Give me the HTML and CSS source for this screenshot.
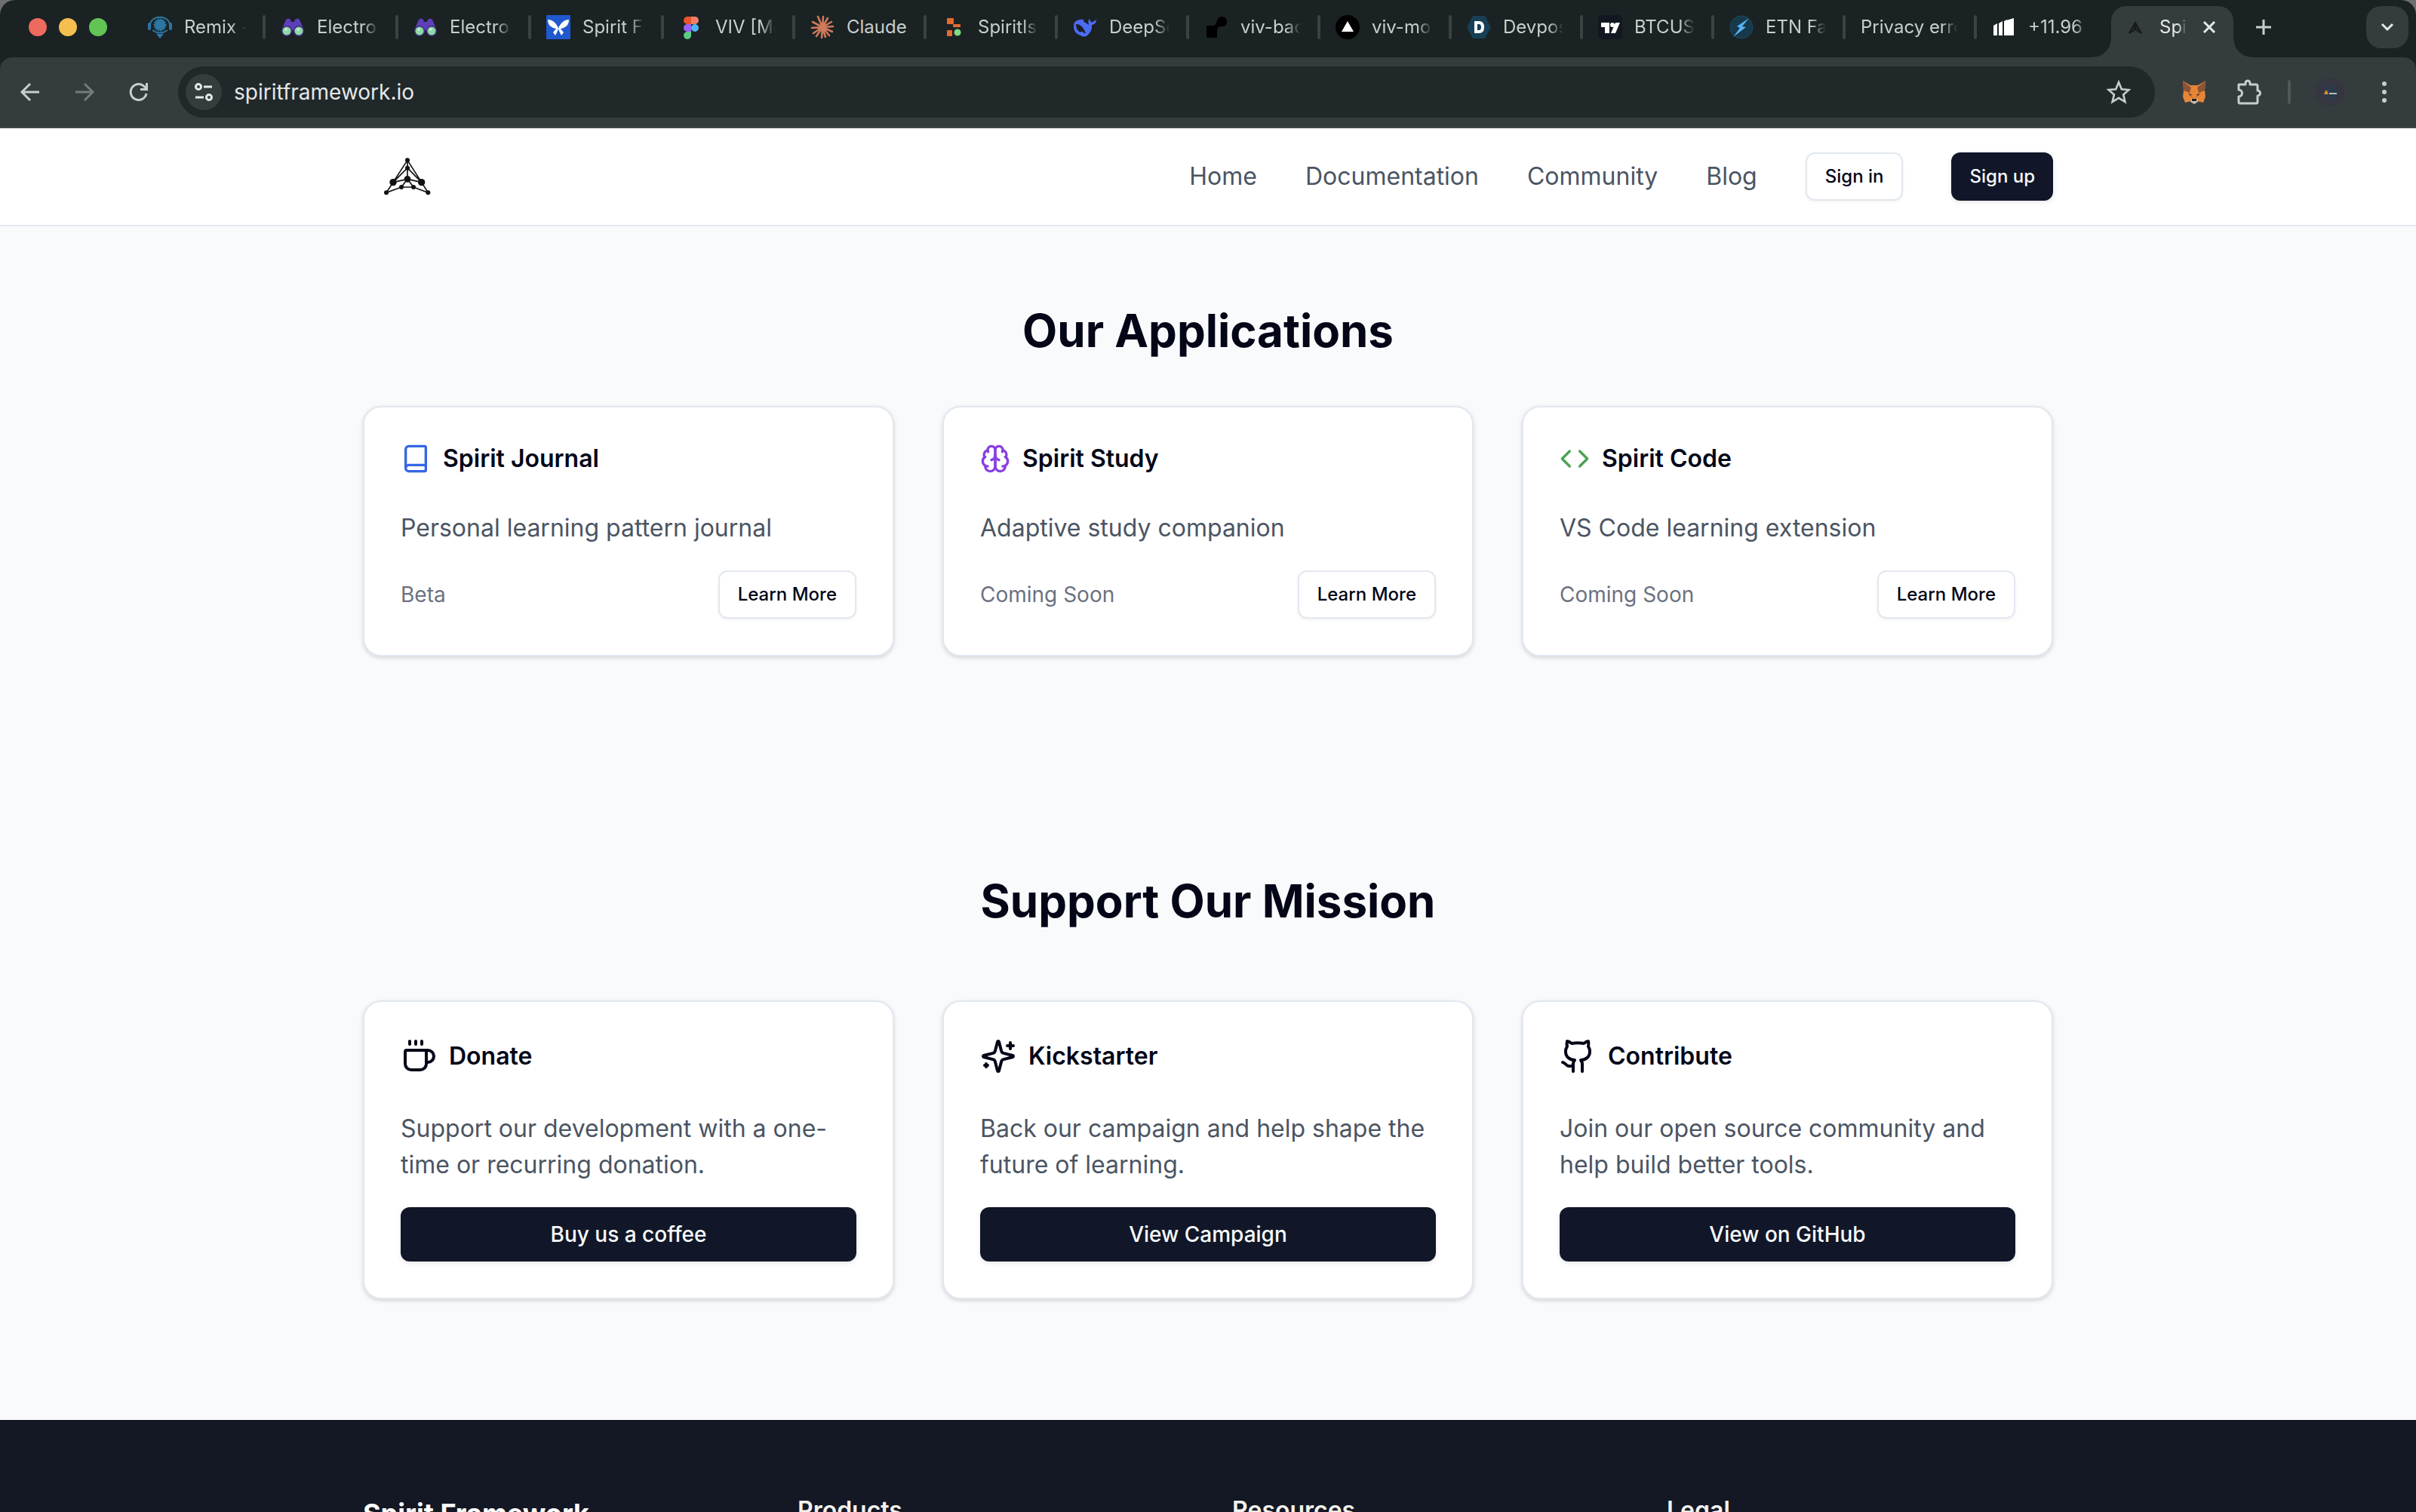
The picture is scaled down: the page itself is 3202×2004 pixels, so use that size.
FILE: index.html
```html
<!DOCTYPE html>
<html lang="en">
<head>
<meta charset="utf-8">
<title>Spirit Framework</title>
<link rel="stylesheet" href="styles.css">
</head>
<body>
<div class="window">
  <div class="tabstrip">
    <div class="lights">
      <button class="light light--close" aria-label="Close window"></button>
      <button class="light light--min" aria-label="Minimize window"></button>
      <button class="light light--max" aria-label="Zoom window"></button>
    </div>
    <div class="tabs">
      <div class="tab tab--wide">
        <svg class="favicon" viewBox="0 0 32 32"><path d="M3 14C3 -1 29 -1 29 14" fill="none" stroke="#2d76a3" stroke-width="2"/><circle cx="16" cy="13" r="7" fill="#2d76a3" stroke="#2d76a3" stroke-width="3" stroke-dasharray="2 1"/><rect x="0" y="10" width="4" height="10" rx="2" fill="#2d76a3"/><rect x="28" y="10" width="4" height="10" rx="2" fill="#2d76a3"/><path d="M6 20q10 7 20 0" fill="none" stroke="#2d76a3" stroke-width="2"/><path d="M11 25h10l-5 6z" fill="#2d76a3"/></svg>
        <span class="tab__title">Remix -</span><span class="tab__sep"></span>
      </div>
      <div class="tab tab--wide">
        <svg class="favicon" viewBox="0 0 32 32"><path d="M1 20L7 6q3-3 6 0l1 3h4l1-3q3-3 6 0l6 14-6 4h-7l-2-5-2 5H7z" fill="#5e3fb8"/><circle cx="8" cy="21" r="7" fill="#3d2c80"/><circle cx="24" cy="21" r="7" fill="#3d2c80"/><circle cx="8" cy="21" r="5.500" fill="#8fd9a8"/><circle cx="24" cy="21" r="5.500" fill="#8fd9a8"/><circle cx="7" cy="19" r="1.500" fill="#d6f5df"/><circle cx="23" cy="19" r="1.500" fill="#d6f5df"/></svg>
        <span class="tab__title">Electro</span><span class="tab__sep"></span>
      </div>
      <div class="tab tab--wide">
        <svg class="favicon" viewBox="0 0 32 32"><path d="M1 20L7 6q3-3 6 0l1 3h4l1-3q3-3 6 0l6 14-6 4h-7l-2-5-2 5H7z" fill="#5e3fb8"/><circle cx="8" cy="21" r="7" fill="#3d2c80"/><circle cx="24" cy="21" r="7" fill="#3d2c80"/><circle cx="8" cy="21" r="5.500" fill="#8fd9a8"/><circle cx="24" cy="21" r="5.500" fill="#8fd9a8"/><circle cx="7" cy="19" r="1.500" fill="#d6f5df"/><circle cx="23" cy="19" r="1.500" fill="#d6f5df"/></svg>
        <span class="tab__title">Electro</span><span class="tab__sep"></span>
      </div>
      <div class="tab tab--wide">
        <svg class="favicon" viewBox="0 0 32 32"><rect width="32" height="32" rx="1" fill="#2058cf"/><path d="M2 6q8 0 13 9l1 3 1-3q5-9 13-9 0 8-7 11l-4 1 4 5-3 4-3-6-1-3-1 3-3 6-3-4 4-5-4-1Q2 14 2 6z" fill="#fff"/></svg>
        <span class="tab__title">Spirit Fr</span><span class="tab__sep"></span>
      </div>
      <div class="tab">
        <svg class="favicon" viewBox="0 0 32 32"><path d="M16 2h-5a5 5 0 0 0 0 10h5z" fill="#e8552d"/><path d="M16 2h5a5 5 0 0 1 0 10h-5z" fill="#f07f6c"/><path d="M16 12h-5a5 5 0 0 0 0 10h5z" fill="#9a62f5"/><circle cx="21" cy="17" r="5" fill="#4eb4f8"/><path d="M16 22h-5a5 5 0 1 0 5 5z" fill="#5bcb87"/></svg>
        <span class="tab__title">VIV [Mo</span><span class="tab__sep"></span>
      </div>
      <div class="tab">
        <svg class="favicon" viewBox="0 0 32 32"><g stroke="#cf7a5b" stroke-width="2.600" stroke-linecap="round"><path d="M16 16L10 2M16 16L17 2M16 16L23 4M16 16L28 9M16 16L30 15M16 16L29 22M16 16L25 27M16 16L20 29M16 16L15 30M16 16L8 28M16 16L4 24M16 16L2 17M16 16L3 9"/></g></svg>
        <span class="tab__title tab__title--whole">Claude</span><span class="tab__sep"></span>
      </div>
      <div class="tab">
        <svg class="favicon" viewBox="0 0 32 32"><rect x="7" y="4" width="9" height="8" rx="1" fill="#e56a2e"/><rect x="15" y="12" width="10" height="4" rx="1" fill="#e56a2e"/><rect x="7" y="20" width="7" height="8" rx="1" fill="#e56a2e"/><circle cx="21" cy="23" r="4.500" fill="#80da85"/></svg>
        <span class="tab__title">SpiritIs</span><span class="tab__sep"></span>
      </div>
      <div class="tab">
        <svg class="favicon" viewBox="0 0 32 32"><path d="M15 6q-3 1 0 3l6 4q-1-5 0-8l4 5 6-4q0 6-6 7 1 8-6 14-4 3-9 0Q0 24 1 13 2 8 6 7q4-2 9-1z" fill="#4c6bf5"/><path d="M4 12q8-1 13 12l-2 0q-4-4-5-1Q4 20 4 12z" fill="#1b2223"/></svg>
        <span class="tab__title">DeepSe</span><span class="tab__sep"></span>
      </div>
      <div class="tab">
        <svg class="favicon" viewBox="0 0 32 32"><path d="M3 14h10q3-2 4-6 1-6 6-6 7 0 7 7 0 6-7 6-6 0-6 6v9H3z" fill="#000"/></svg>
        <span class="tab__title">viv-bac</span><span class="tab__sep"></span>
      </div>
      <div class="tab">
        <svg class="favicon" viewBox="0 0 32 32"><circle cx="16" cy="16" r="16" fill="#000"/><path d="M16 8l8 14H8z" fill="#fff"/></svg>
        <span class="tab__title">viv-mob</span><span class="tab__sep"></span>
      </div>
      <div class="tab">
        <svg class="favicon" viewBox="0 0 32 32"><path d="M8 1h16l8 15-8 15H8L0 16z" fill="#173f56"/><path d="M10 8h6q7 0 7 8t-7 8h-6zm4 4v8h2q3 0 3-4t-3-4z" fill="#fff"/></svg>
        <span class="tab__title">Devpos</span><span class="tab__sep"></span>
      </div>
      <div class="tab">
        <svg class="favicon" viewBox="0 0 32 32"><rect width="32" height="32" rx="5" fill="#131722"/><path d="M4 10h11v14h-6v-8H4z" fill="#fff"/><circle cx="19" cy="13" r="3" fill="#fff"/><path d="M23 10h6l-6 14h-6z" fill="#fff"/></svg>
        <span class="tab__title">BTCUS</span><span class="tab__sep"></span>
      </div>
      <div class="tab">
        <svg class="favicon" viewBox="0 0 32 32"><circle cx="16" cy="16" r="15" fill="#16384a" stroke="#1e4a62"/><path d="M26 4L10 15l4 2-9 12 17-13-5-1z" fill="#55b3f3"/></svg>
        <span class="tab__title">ETN Fa</span><span class="tab__sep"></span>
      </div>
      <div class="tab">
        <span class="tab__title">Privacy erro</span><span class="tab__sep"></span>
      </div>
      <div class="tab">
        <svg class="favicon" viewBox="0 0 32 32"><path d="M2 14l5-3v16H2zM9 11l5-3v19H9zM16 8l4-2v21h-4zM19 7l10-3v23H19z" fill="#fff"/></svg>
        <span class="tab__title">+11.96</span><span class="tab__sep tab__sep--hidden"></span>
      </div>
      <div class="tab tab--active">
        <svg class="favicon" viewBox="0 0 32 32"><path d="M16 10L8 24l8-5 8 5z M16 10v9" fill="none" stroke="#16191a" stroke-width="2"/><path d="M16 12l-5 8 5-2 5 2z" fill="#16191a" opacity=".600"/></svg>
        <span class="tab__title tab__title--short">Spi</span>
        <button class="tab__close" aria-label="Close tab"><svg width="20" height="20" viewBox="0 0 20 20"><path d="M3 3l14 14M17 3L3 17" stroke="#e4e8e8" stroke-width="3"/></svg></button>
      </div>
    </div>
    <button class="newtab" aria-label="New tab"><svg width="24" height="24" viewBox="0 0 24 24"><path d="M12 2v20M2 12h20" stroke="#c6cece" stroke-width="3"/></svg></button>
    <button class="tabsearch" aria-label="Search tabs"><svg width="24" height="24" viewBox="0 0 24 24"><path d="M5 8l7 7 7-7" fill="none" stroke="#e4e8e8" stroke-width="3"/></svg></button>
  </div>

  <div class="toolbar">
    <div class="toolbar__nav">
      <button class="tool" aria-label="Back"><svg width="32" height="32" viewBox="0 0 32 32"><path d="M28 16H6M16 5L5 16l11 11" fill="none" stroke="#c6cece" stroke-width="3"/></svg></button>
      <button class="tool" aria-label="Forward"><svg width="32" height="32" viewBox="0 0 32 32"><path d="M4 16h22M16 5l11 11-11 11" fill="none" stroke="#757b7c" stroke-width="3"/></svg></button>
      <button class="tool" aria-label="Reload"><svg width="32" height="32" viewBox="0 0 32 32"><path d="M26 18A10.500 10.500 0 1 1 24 9.500L27 12" fill="none" stroke="#c6cece" stroke-width="3"/><path d="M28 4v10H18v-3h7V4z" fill="#c6cece"/></svg></button>
    </div>
    <div class="omnibox">
      <button class="siteinfo" aria-label="View site information"><svg width="28" height="28" viewBox="0 0 28 28"><g fill="none" stroke="#e4e8e8" stroke-width="3"><circle cx="7" cy="7" r="3.500"/><path d="M14 7h11M3 21h11"/><circle cx="21" cy="21" r="3.500"/></g></svg></button>
      <input class="omnibox__input" type="text" aria-label="Address" value="spiritframework.io">
      <button class="tool" aria-label="Bookmark this tab"><svg width="32" height="32" viewBox="0 0 32 32"><path d="M16 3l3.800 9.200 9.700.8-7.400 6.400 2.300 9.600-8.400-5.200L7.600 29l2.300-9.600L2.500 13l9.700-.8z" fill="none" stroke="#c6cece" stroke-width="2.600"/></svg></button>
    </div>
    <div class="toolbar__ext">
      <button class="tool" aria-label="Wallet"><svg width="32" height="32" viewBox="0 0 32 32"><path d="M1 1l10 6h10l10-6-1 13 1 8-3 8-8-2-4 3-4-3-8 2-3-8 1-8z" fill="#e58637"/><path d="M1 1l11 9-2 7-8-3zM31 1l-11 9 2 7 8-3z" fill="#8e5334"/><path d="M7 18l6 1 1 5zM25 18l-6 1-1 5z" fill="#c96e2c"/><path d="M12 25h8l1 4-5 3-5-3z" fill="#c9bcae"/><path d="M13 25h6v3h-6z" fill="#1e2021"/><path d="M8 18l4 1 0 2zM24 18l-4 1 0 2z" fill="#2d2b35"/></svg></button>
      <button class="tool" aria-label="Extensions"><svg width="36" height="36" viewBox="0 0 36 36"><path d="M5 8h9V6a3 3 0 0 1 6 0v2h8a2 2 0 0 1 2 2v6a3.500 3.500 0 0 1 0 7v8a2 2 0 0 1-2 2H7a2 2 0 0 1-2-2v-7a4.500 4.500 0 0 0 0-9z" fill="none" stroke="#c6cece" stroke-width="3" stroke-linejoin="round"/></svg></button>
      <span class="toolbar__sep"></span>
      <button class="tool" aria-label="Profile"><svg width="40" height="40" viewBox="0 0 40 40"><circle cx="20" cy="20" r="19" fill="#35363f"/><path d="M12 10l4 3 4-4 3 4 5-3 3 8-3 5 2 4-6 1-3 5-5-6-5 2 1-7z" fill="#2c3a4b"/><path d="M12 23l2-5h2l2 5z" fill="#e08a2d"/><path d="M19 21h10v2H19z" fill="#b9bcc0"/></svg></button>
      <button class="tool" aria-label="Menu"><svg width="32" height="32" viewBox="0 0 32 32"><g fill="#c6cece"><circle cx="16" cy="5" r="3"/><circle cx="16" cy="16" r="3"/><circle cx="16" cy="27" r="3"/></g></svg></button>
    </div>
  </div>

  <div class="page">
    <header class="header">
      <div class="container header__row">
        <a class="logo" href="#" aria-label="Spirit Framework"><svg width="118" height="64" viewBox="63 96 354 192"><g fill="none" stroke="#111" stroke-width="5"><path d="M240 127L183 215M240 127L296 215M240 127V202M240 158L183 215M240 158L296 215M183 215L240 202L296 215M183 215L156 256L216 234H264L322 256L296 215M240 202L216 234M240 202L264 234"/></g><g fill="#111"><circle cx="240" cy="127" r="9"/><circle cx="240" cy="158" r="9"/><circle cx="240" cy="202" r="13"/><circle cx="183" cy="215" r="14"/><circle cx="296" cy="215" r="14"/><circle cx="156" cy="256" r="9"/><circle cx="322" cy="256" r="9"/><circle cx="216" cy="234" r="9"/><circle cx="264" cy="234" r="9"/></g></svg></a>
        <nav class="nav">
          <a class="nav__link" href="#">Home</a>
          <a class="nav__link" href="#">Documentation</a>
          <a class="nav__link" href="#">Community</a>
          <a class="nav__link" href="#">Blog</a>
          <button class="btn btn--sm btn--outline">Sign in</button>
          <button class="btn btn--sm btn--solid">Sign up</button>
        </nav>
      </div>
    </header>

    <main class="main">
      <section class="section section--apps">
        <div class="container">
          <h2 class="heading heading--apps">Our Applications</h2>
          <div class="cards">
            <article class="card">
              <h3 class="card__title"><svg class="icon icon--md icon--blue" viewBox="0 0 24 24"><path d="M4 19.500v-15A2.500 2.500 0 0 1 6.500 2H19a1 1 0 0 1 1 1v18a1 1 0 0 1-1 1H6.500a1 1 0 0 1 0-5H20"/></svg>Spirit Journal</h3>
              <div class="card__body">
                <p class="card__text">Personal learning pattern journal</p>
                <div class="card__row"><span class="status">Beta</span><button class="btn btn--sm btn--outline">Learn More</button></div>
              </div>
            </article>
            <article class="card">
              <h3 class="card__title"><svg class="icon icon--md icon--purple" viewBox="0 0 24 24"><path d="M12 5a3 3 0 1 0-5.997.125 4 4 0 0 0-2.526 5.770 4 4 0 0 0 .556 6.588A4 4 0 1 0 12 18Z"/><path d="M12 5a3 3 0 1 1 5.997.125 4 4 0 0 1 2.526 5.770 4 4 0 0 1-.556 6.588A4 4 0 1 1 12 18Z"/><path d="M15 13a4.500 4.500 0 0 1-3-4 4.500 4.500 0 0 1-3 4"/><path d="M17.599 6.500a3 3 0 0 0 .399-1.375"/><path d="M6.003 5.125A3 3 0 0 0 6.401 6.500"/><path d="M3.477 10.896a4 4 0 0 1 .585-.396"/><path d="M19.938 10.500a4 4 0 0 1 .585.396"/><path d="M6 18a4 4 0 0 1-1.967-.516"/><path d="M19.967 17.484A4 4 0 0 1 18 18"/></svg>Spirit Study</h3>
              <div class="card__body">
                <p class="card__text">Adaptive study companion</p>
                <div class="card__row"><span class="status">Coming Soon</span><button class="btn btn--sm btn--outline">Learn More</button></div>
              </div>
            </article>
            <article class="card">
              <h3 class="card__title"><svg class="icon icon--md icon--green" viewBox="0 0 24 24"><path d="M16 18l6-6-6-6"/><path d="M8 6l-6 6 6 6"/></svg>Spirit Code</h3>
              <div class="card__body">
                <p class="card__text">VS Code learning extension</p>
                <div class="card__row"><span class="status">Coming Soon</span><button class="btn btn--sm btn--outline">Learn More</button></div>
              </div>
            </article>
          </div>
        </div>
      </section>

      <section class="section section--support">
        <div class="container">
          <h2 class="heading heading--support">Support Our Mission</h2>
          <div class="cards">
            <article class="card">
              <h3 class="card__title"><svg class="icon icon--lg" viewBox="0 0 24 24"><path d="M10 2v2M14 2v2M6 2v2"/><path d="M16 8a1 1 0 0 1 1 1v8a4 4 0 0 1-4 4H7a4 4 0 0 1-4-4V9a1 1 0 0 1 1-1h14a4 4 0 1 1 0 8h-1"/></svg>Donate</h3>
              <div class="card__body">
                <p class="card__text">Support our development with a one-time or recurring donation.</p>
                <button class="btn btn--block btn--solid">Buy us a coffee</button>
              </div>
            </article>
            <article class="card">
              <h3 class="card__title"><svg class="icon icon--lg" viewBox="0 0 24 24"><path d="M9.937 15.500A2 2 0 0 0 8.500 14.063l-6.135-1.582a.5.5 0 0 1 0-.962L8.500 9.936A2 2 0 0 0 9.937 8.500l1.582-6.135a.5.5 0 0 1 .963 0L14.063 8.500A2 2 0 0 0 15.500 9.937l6.135 1.581a.5.5 0 0 1 0 .964L15.500 14.063a2 2 0 0 0-1.437 1.437l-1.582 6.135a.5.5 0 0 1-.963 0z"/><path d="M20 3v4M22 5h-4M4 17v2M5 18H3"/></svg>Kickstarter</h3>
              <div class="card__body">
                <p class="card__text">Back our campaign and help shape the future of learning.</p>
                <button class="btn btn--block btn--solid">View Campaign</button>
              </div>
            </article>
            <article class="card">
              <h3 class="card__title"><svg class="icon icon--lg" viewBox="0 0 24 24"><path d="M15 22v-4a4.800 4.800 0 0 0-1-3.500c3 0 6-2 6-5.500.08-1.250-.27-2.480-1-3.500.28-1.150.28-2.350 0-3.500 0 0-1 0-3 1.500-2.640-.5-5.360-.5-8 0C6 2 5 2 5 2c-.3 1.150-.3 2.350 0 3.500A5.403 5.403 0 0 0 4 9c0 3.500 3 5.500 6 5.500-.39.49-.68 1.050-.85 1.650-.17.6-.22 1.230-.15 1.850v4"/><path d="M9 18c-4.510 2-5-2-7-2"/></svg>Contribute</h3>
              <div class="card__body">
                <p class="card__text">Join our open source community and help build better tools.</p>
                <button class="btn btn--block btn--solid">View on GitHub</button>
              </div>
            </article>
          </div>
        </div>
      </section>
    </main>

    <footer class="footer">
      <div class="container footer__cols">
        <h3 class="footer__brand">Spirit Framework</h3>
        <h4 class="footer__title">Products</h4>
        <h4 class="footer__title">Resources</h4>
        <h4 class="footer__title">Legal</h4>
      </div>
    </footer>
  </div>
</div>
</body>
</html>
```
FILE: styles.css
```css
* { box-sizing: border-box; }

body {
  margin: 0;
  background: #6c6f6e;
  color: #020617;
  font-family: Inter, "Liberation Sans", sans-serif;
  font-size: 32px;
  line-height: 48px;
}

h2, h3, h4, p { margin: 0; }
button { margin: 0; padding: 0; border: 0; background: none; font-family: inherit; }
svg { display: block; flex: none; }

.window {
  display: flex;
  flex-direction: column;
  height: 100vh;
  overflow: hidden;
  border-radius: 20px 20px 0 0;
  background: #1b2223;
}

/* Tab strip */
.tabstrip {
  display: flex;
  align-items: center;
  flex: none;
  height: 76px;
  padding: 0 10px 4px 38px;
}
.lights { display: flex; gap: 16px; flex: none; margin-right: 34px; }
.light { width: 24px; height: 24px; border-radius: 50%; }
.light--close { background: #ed6a5f; }
.light--min { background: #f5bf4f; }
.light--max { background: #61c455; }

.tabs { display: flex; align-items: center; min-width: 0; }
.tab {
  display: flex;
  align-items: center;
  flex: 0 1 auto;
  width: 174px;
  min-width: 0;
  padding-left: 20px;
}
.tab--wide { width: 176px; }
.favicon { width: 32px; height: 32px; margin-right: 16px; }
.tab__title {
  flex: 1;
  min-width: 0;
  overflow: hidden;
  white-space: nowrap;
  color: #c6cece;
  font-size: 24px;
  line-height: 32px;
  -webkit-mask-image: linear-gradient(to left, transparent, #000 20px);
  mask-image: linear-gradient(to left, transparent, #000 20px);
}
.tab__title--short {
  -webkit-mask-image: linear-gradient(to left, transparent, #000 12px);
  mask-image: linear-gradient(to left, transparent, #000 12px);
}
.tab__title--whole {
  overflow: visible;
  -webkit-mask-image: none;
  mask-image: none;
}
.tab__sep {
  flex: none;
  width: 4px;
  height: 32px;
  margin-left: 22px;
  border-radius: 2px;
  background: #3b4244;
}
.tab__sep--hidden { visibility: hidden; }

.tab--active {
  position: relative;
  align-self: flex-start;
  width: 162px;
  height: 68px;
  margin: 4px 0 -8px 4px;
  padding: 0 22px 12px 16px;
  border-radius: 20px 20px 0 0;
  background: #353c3e;
}
.tab--active .tab__title { color: #e4e8e8; }
.tab--active::before,
.tab--active::after {
  content: "";
  position: absolute;
  bottom: 0;
  width: 24px;
  height: 24px;
}
.tab--active::before {
  right: 100%;
  background: radial-gradient(circle at 0 0, transparent 23px, #353c3e 24px);
}
.tab--active::after {
  left: 100%;
  background: radial-gradient(circle at 100% 0, transparent 23px, #353c3e 24px);
}
.tab__close { margin-left: 20px; }
.newtab {
  display: grid;
  place-items: center;
  flex: none;
  width: 48px;
  height: 48px;
  margin-left: 16px;
}
.tabsearch {
  display: grid;
  place-items: center;
  flex: none;
  width: 56px;
  height: 56px;
  margin-left: auto;
  border-radius: 20px;
  background: #353c3e;
}

/* Toolbar */
.toolbar {
  display: flex;
  align-items: center;
  gap: 28px;
  flex: none;
  height: 94px;
  padding: 0 18px 0 16px;
  border-bottom: 2px solid #464847;
  border-radius: 16px 16px 0 0;
  background: #353c3e;
}
.toolbar__nav, .toolbar__ext { display: flex; align-items: center; gap: 24px; flex: none; }
.tool { display: grid; place-items: center; flex: none; width: 48px; height: 48px; }
.omnibox {
  display: flex;
  align-items: center;
  flex: 1;
  min-width: 0;
  height: 68px;
  padding: 0 24px 0 10px;
  border-radius: 34px;
  background: #20282a;
}
.siteinfo {
  display: grid;
  place-items: center;
  flex: none;
  width: 48px;
  height: 48px;
  border-radius: 50%;
  background: #353c3e;
}
.omnibox__input {
  flex: 1;
  min-width: 0;
  margin: 0;
  padding: 0 16px;
  border: 0;
  outline: 0;
  background: none;
  color: #e4e8e8;
  font-family: inherit;
  font-size: 28px;
  line-height: 40px;
}
.toolbar__sep {
  width: 4px;
  height: 32px;
  margin: 0 4px;
  border-radius: 2px;
  background: #4f5759;
}

/* Page */
.page { flex: 1; min-height: 0; overflow: hidden; background: #f9fafc; }
.container { max-width: 2240px; margin: 0 auto; }

.header { padding: 32px 0; border-bottom: 2px solid #e2e8f0; background: #fff; }
.header__row { display: flex; align-items: center; justify-content: space-between; }
.nav { display: flex; align-items: center; gap: 64px; }
.nav__link { color: #4b5563; text-decoration: none; }

.btn {
  border-radius: 12px;
  font-weight: 500;
  white-space: nowrap;
}
.btn--sm { height: 64px; padding: 0 24px; font-size: 24px; line-height: 32px; }
.btn--block { width: 100%; height: 72px; font-size: 28px; line-height: 40px; }
.btn--outline {
  border: 2px solid #e2e8f0;
  background: #fff;
  color: #020617;
  box-shadow: 0 2px 4px rgba(0, 0, 0, .05);
}
.btn--solid {
  background: #111728;
  color: #f8fafc;
  box-shadow: 0 2px 6px rgba(0, 0, 0, .1);
}

.section--apps { padding: 102px 0 128px; }
.section--support { padding: 160px 0; }
.heading { font-size: 60px; line-height: 72px; font-weight: 700; text-align: center; }
.heading--apps { margin-bottom: 64px; }
.heading--support { margin-bottom: 96px; }

.cards { display: grid; grid-template-columns: repeat(3, minmax(0, 1fr)); gap: 64px; }
.card {
  display: flex;
  flex-direction: column;
  gap: 48px;
  padding: 48px;
  border: 2px solid #e2e8f0;
  border-radius: 24px;
  background: #fff;
  box-shadow: 0 2px 6px rgba(0, 0, 0, .1), 0 2px 4px rgba(0, 0, 0, .06);
}
.card__title {
  display: flex;
  align-items: center;
  gap: 16px;
  font-size: 32px;
  line-height: 32px;
  font-weight: 600;
}
.card__body { display: flex; flex-direction: column; gap: 32px; }
.card__text { color: #4b5563; }
.card__row { display: flex; align-items: center; justify-content: space-between; }
.status { color: #6b7280; font-size: 28px; line-height: 40px; }

.icon {
  fill: none;
  stroke: currentColor;
  stroke-width: 2;
  stroke-linecap: round;
  stroke-linejoin: round;
}
.icon--md { width: 40px; height: 40px; }
.icon--lg { width: 48px; height: 48px; }
.icon--blue { color: #3366e3; }
.icon--purple { color: #8840e2; }
.icon--green { color: #4ba153; }

/* Footer */
.footer { padding: 96px 0; background: #131824; color: #f3f2ef; }
.footer__cols { display: grid; grid-template-columns: repeat(4, minmax(0, 1fr)); gap: 64px; }
.footer__brand { font-size: 36px; line-height: 56px; font-weight: 700; color: #fff; }
.footer__title { font-size: 32px; line-height: 48px; font-weight: 600; }
```
